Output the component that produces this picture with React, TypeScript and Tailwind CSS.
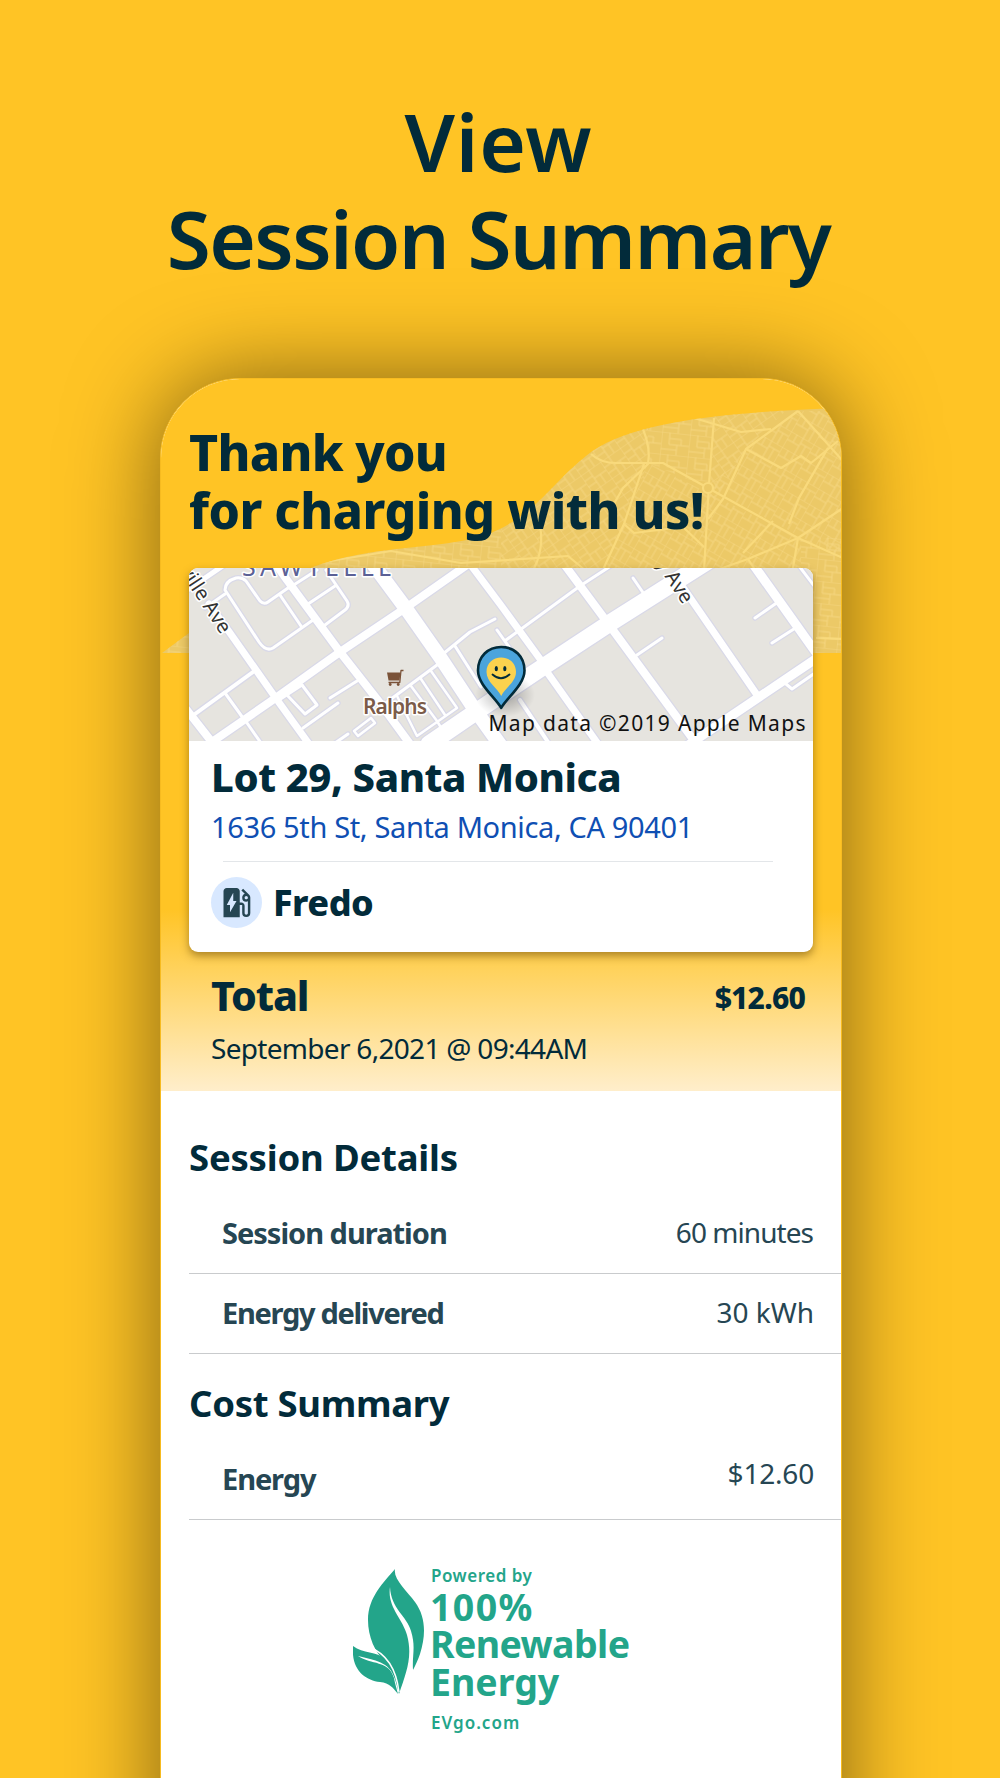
import { MdEvStation } from "react-icons/md";

const mapRoads: { d: string; w: number }[] = [
  { d: "M0 21 L35 -3", w: 5 },
  { d: "M16 40 L36 26", w: 3 },
  { d: "M99 20 L79 34 Q75 37 71 33 L57 13 Q53 9 47 10 Q36 13 36 22 L70 74 Q77 84 84 80 L124 52", w: 3 },
  { d: "M91 27 L112 58", w: 3 },
  { d: "M119 36 L146 18", w: 3 },
  { d: "M100 20 L128 2", w: 3 },
  { d: "M137 2 L158 33 Q161 38 156 42 L136 57", w: 3 },
  { d: "M6 146 L64 104", w: 4 },
  { d: "M36 125 L54 150 M58 155 L72 175", w: 3 },
  { d: "M98 127 L116 146 L128 137 L113 117", w: 3 },
  { d: "M90 132 L113 117", w: 3 },
  { d: "M141 130 L168 113", w: 3 },
  { d: "M114 160 L149 135", w: 3 },
  { d: "M136 182 L159 166", w: 3 },
  { d: "M165 163 L182 150 L186 155 L169 168 Z", w: 2.5 },
  { d: "M198 134 L248 97", w: 3 },
  { d: "M208 128 L228 168 L268 140 L242 103 M222 118 L248 153 L257 168 M232 111 L256 147", w: 2.5 },
  { d: "M306 51 L281 64 L254 86", w: 3 },
  { d: "M266 78 L292 119", w: 3 },
  { d: "M308 62 L325 86", w: 3 },
  { d: "M317 72 L391 18 L431 -8", w: 3 },
  { d: "M444 10 L455 26", w: 3 },
  { d: "M448 87 L473 70", w: 3 },
  { d: "M566 50 L589 34 M583 75 L608 59", w: 3 },
  { d: "M597 116 L603 121 L626 105", w: 3 },
  { d: "M331 132 L359 174", w: 4 },
  { d: "M607 -6 L626 19", w: 3 },
  { d: "M20 36 L41 65 L86 129 L120 176", w: 7 },
  { d: "M84 -8 L98 12 L151 84 L191 135 L221 176", w: 8 },
  { d: "M-3 141 L26 178", w: 8 },
  { d: "M285 -8 L218 39 L151 84 L88 129 L20 176", w: 8 },
  { d: "M278 -8 L311 36 L354 95", w: 7 },
  { d: "M372 -8 L418 54 L509 178", w: 8 },
  { d: "M358 104 L409 176", w: 7 },
  { d: "M493 18 L568 127", w: 7 },
  { d: "M561 -8 L628 86", w: 9 },
  { d: "M628 90 L511 169 L498 178", w: 9 },
  { d: "M178 -12 L218 42 L251 89 L284 139 L312 178", w: 14 },
  { d: "M530 -14 L421 55 L354 99 L300 135 L240 176", w: 17 },
];

const hillRoads = [
  "M482 50 Q490 70 487 85 L462 109 L450 130",
  "M430 75 Q440 84 455 84 L502 84 L547 109 L637 159 L682 179",
  "M553 39 L548 105 L543 192",
  "M533 39 L580 53 L610 50",
  "M637 32 L585 70 L562 120 L547 140",
  "M637 32 L682 82",
  "M585 70 L620 89 L640 77 L650 84 L677 62",
  "M667 69 L638 119 L628 145",
  "M682 129 L637 159 L587 180 L553 192",
  "M637 159 L631 195",
  "M582 174 L612 142",
  "M587 180 L600 200",
  "M120 190 L230 172 L300 184 L407 177 L425 192",
  "M483 85 L463 145 L440 195",
  "M463 145 L473 154 L522 148 L543 168",
  "M378 142 Q385 170 370 195",
  "M655 259 L682 260",
];

const hillShape =
  "M1 274 L28 254 C90 215 130 195 147 190 C215 163 280 173 330 154 C375 135 390 105 425 77 C465 43 560 33 682 29 L682 274 Z";

function HillMap() {
  return (
    <svg className="absolute left-0 top-0" width="682" height="274" viewBox="0 0 682 274" fill="none">
      <defs>
        <clipPath id="hill">
          <path d={hillShape} />
        </clipPath>
        <pattern id="blocksA" width="26" height="18" patternUnits="userSpaceOnUse" patternTransform="rotate(30)">
          <path d="M0 0 H26 M0 0 V18 M0 9 H14 M14 0 V18 M7 0 V9 M14 6 H26 M20 6 V18" stroke="#f5d67f" strokeWidth="1" />
        </pattern>
        <pattern id="blocksB" width="24" height="20" patternUnits="userSpaceOnUse" patternTransform="rotate(-35)">
          <path d="M0 0 H24 M0 0 V20 M10 0 V20 M0 7 H10 M0 14 H10 M10 10 H24 M17 10 V20" stroke="#f5d67f" strokeWidth="1" />
        </pattern>
        <pattern id="blocksC" width="28" height="22" patternUnits="userSpaceOnUse" patternTransform="rotate(6)">
          <path d="M0 0 H28 M0 0 V22 M8 0 V12 H28 M16 12 V22 M8 6 H20 V12 M0 17 H16" stroke="#f5d67f" strokeWidth="1" />
        </pattern>
      </defs>
      <g clipPath="url(#hill)">
        <path d="M0 0 H682 V274 H0 Z" fill="#ecc967" />
        <path d="M0 120 H340 V274 H0 Z M487 30 H553 L548 109 L487 84 Z M640 159 H682 V274 H640 Z" fill="url(#blocksC)" />
        <path d="M340 0 H487 V84 L462 145 L440 200 H340 Z M553 20 H637 L585 70 L548 130 Z" fill="url(#blocksB)" />
        <path d="M637 32 H682 V180 L548 109 L585 70 Z M487 84 L640 160 V200 H440 Z" fill="url(#blocksA)" />
        <g stroke="#f9da7c" strokeWidth="2.2" strokeLinejoin="round">
          {hillRoads.map((d) => (
            <path key={d} d={d} />
          ))}
          <circle cx="547" cy="109" r="5" fill="#ecc967" />
        </g>
      </g>
    </svg>
  );
}

function LocationMap() {
  return (
    <svg className="block" width="624" height="173" viewBox="0 0 624 173" fill="none">
      <defs>
        <radialGradient id="pinShade">
          <stop offset="0" stopColor="#000" stopOpacity="0.3" />
          <stop offset="1" stopColor="#000" stopOpacity="0" />
        </radialGradient>
      </defs>
      <rect width="624" height="173" fill="#e6e4df" />
      <g stroke="#d9d9e8" strokeLinecap="round" strokeLinejoin="round">
        {mapRoads.map((r) => (
          <path key={r.d} d={r.d} strokeWidth={r.w + 2.5} />
        ))}
      </g>
      <g stroke="#fff" strokeLinecap="round" strokeLinejoin="round">
        {mapRoads.map((r) => (
          <path key={r.d} d={r.d} strokeWidth={r.w} />
        ))}
      </g>
      <g className="font-['Noto_Sans']" stroke="#fff" strokeWidth="3" strokeLinejoin="round" paintOrder="stroke">
        <text x="53" y="7.5" fontSize="25" fill="#5b6196" textLength="150">
          SAWTELLE
        </text>
        <text transform="translate(32 67) rotate(57)" fontSize="20" fill="#333" textAnchor="end">
          ville Ave
        </text>
        <text transform="translate(494 37) rotate(57)" fontSize="20" fill="#333" textAnchor="end">
          y Ave
        </text>
        <text x="174" y="146" fontSize="21" fontWeight="600" fill="#7b5b49" textLength="64">
          Ralphs
        </text>
      </g>
      <path d="M198 104.500 H211.500 L210.500 112.500 H199.500 Z" fill="#7a5238" />
      <path
        d="M214.500 102.500 H212 L210.800 114.500 H199.500"
        stroke="#7a5238"
        strokeWidth="1.300"
        strokeLinejoin="round"
      />
      <circle cx="201.200" cy="116.500" r="1.400" fill="#7a5238" />
      <circle cx="209.200" cy="116.500" r="1.400" fill="#7a5238" />
      <ellipse cx="316" cy="127" rx="30" ry="22" fill="url(#pinShade)" />
      <path
        d="M312.200 140 C307 130 289 117 289 102.500 C289 88.500 299 79 312.200 79 C325.500 79 335.500 88.500 335.500 102.500 C335.500 117 317.500 130 312.200 140 Z"
        fill="#4ba4dc"
        stroke="#022b3a"
        strokeWidth="2.600"
        strokeLinejoin="round"
      />
      <path
        d="M312.200 128 C308.500 120 297.500 114 297.500 104 C297.500 95 304 89.500 312.200 89.500 C320.500 89.500 327 95 327 104 C327 114 316 120 312.200 128 Z"
        fill="#fbd24e"
      />
      <ellipse cx="307.300" cy="100.700" rx="1.600" ry="2.600" fill="#022b3a" />
      <ellipse cx="315.800" cy="100.700" rx="1.600" ry="2.600" fill="#022b3a" />
      <path d="M303.500 106.500 Q312 114 320.500 106.500" stroke="#022b3a" strokeWidth="1.800" strokeLinecap="round" />
      <text
        className="font-['Noto_Sans']"
        x="299.500"
        y="162.700"
        fontSize="21"
        fill="#111"
        textLength="317"
      >
        Map data ©2019 Apple Maps
      </text>
    </svg>
  );
}

function LeafLogo() {
  return (
    <svg className="mt-[3px] block" width="72" height="126" viewBox="0 0 72 126">
      <path
        d="M42 0 C40 10 54 22 62 33 C73 48 73 66 67 85 C65 91 62 97 60 101 C59 86 63 78 58 62 C54 47 38 40 37 18 C34 38 50 50 54 66 C60 88 53 104 46 125 C43 112 40 101 32 93 C22 83 15 68 15 51 C15 28 31 13 42 0 Z"
        fill="#23a58a"
      />
      <path
        d="M0 77 C10 85 24 82 32 90 C41 99 43 109 42 109 C36 93 22 91 5 87 C18 96 36 91 41 109 C42 115 44 121 45 125 C40 119 37 114 27 113 C12 111 -2 101 0 77 Z"
        fill="#23a58a"
      />
      <path d="M16 78 C32 84 43 98 46 123" stroke="#fff" strokeWidth="1.500" fill="none" />
    </svg>
  );
}

function DetailRow({
  label,
  value,
  labelClass,
  className,
  valueClass = "-mt-px",
}: {
  label: string;
  value: string;
  labelClass: string;
  className: string;
  valueClass?: string;
}) {
  return (
    <div
      className={`ml-7 flex justify-between border-b border-[#c9cbcd] pb-[22px] pl-[33px] pr-[27px] leading-9 text-[#264653] ${className}`}
    >
      <span className={`text-[29px] font-bold ${labelClass}`}>{label}</span>
      <span className={`text-[28px] ${valueClass}`}>{value}</span>
    </div>
  );
}

export default function App() {
  return (
    <div className="h-[1778px] w-[1000px] overflow-hidden bg-[#ffc425] font-['Noto_Sans',sans-serif] text-[#022b3a]">
      <h1 className="pr-[3px] pt-[92px] text-center text-[80px] font-semibold leading-[97px]">
        <span className="block tracking-[0.8px]">View</span>
        <span className="block tracking-[-1.6px]">Session Summary</span>
      </h1>

      <main className="relative ml-[160px] mt-[92px] h-[1500px] w-[682px] overflow-hidden rounded-t-[80px] border border-[#f7bb20] bg-white shadow-[0_0_92px_rgba(0,0,0,0.5)]">
        <header className="relative bg-[linear-gradient(#ffc425_74.5%,#ffeecb)] pb-[25px]">
          <HillMap />
          <div className="relative px-7 pt-[44px]">
            <h2 className="text-[50px] font-extrabold leading-[58px]">
              <span className="block tracking-[-0.7px]">Thank you</span>
              <span className="block tracking-[-0.5px]">for charging with us!</span>
            </h2>

            <section className="mt-[29px] w-[624px] overflow-hidden rounded-[9px] bg-white shadow-[0_4px_8px_rgba(90,60,0,0.5)]">
              <LocationMap />
              <div className="pb-[24px] pl-[22px] pt-[12px]">
                <h3 className="text-[40px] font-extrabold leading-[48px] tracking-[-0.4px]">Lot 29, Santa Monica</h3>
                <p className="mt-2 text-[29px] leading-9 tracking-[-0.36px] text-[#0f4fb3]">
                  1636 5th St, Santa Monica, CA 90401
                </p>
                <hr className="ml-3 mr-10 mt-4 border-[#e3e6e9]" />
                <div className="mt-[15px] flex items-center gap-[11px]">
                  <span className="flex h-[51px] w-[51px] items-center justify-center rounded-full bg-[#d8e8ff]">
                    <MdEvStation className="text-[39px] text-[#264653]" />
                  </span>
                  <span className="text-[36px] font-extrabold leading-[49px] tracking-[-0.5px]">Fredo</span>
                </div>
              </div>
            </section>

            <div className="ml-[22px] mr-[8px] mt-[18px] flex justify-between">
              <div>
                <p className="text-[41px] font-extrabold leading-[50px] tracking-[-1.1px]">Total</p>
                <p className="mt-[10px] text-[28px] leading-9 tracking-[-0.7px]">September 6,2021 @ 09:44AM</p>
              </div>
              <p className="text-[30px] font-extrabold leading-[56px] tracking-[-0.8px]">$12.60</p>
            </div>
          </div>
        </header>

        <h2 className="ml-7 pt-[44px] text-[36.5px] font-bold leading-[44px] tracking-[-0.2px]">Session Details</h2>
        <DetailRow
          className="pt-9"
          label="Session duration"
          labelClass="tracking-[-1px]"
          value="60 minutes"
          valueClass="-mt-px mr-px tracking-[-0.95px]"
        />
        <DetailRow
          className="pt-[21px]"
          label="Energy delivered"
          labelClass="tracking-[-1.3px]"
          value="30 kWh"
        />

        <h2 className="ml-7 pt-[27px] text-[36.5px] font-bold leading-[44px] tracking-[-0.3px]">Cost Summary</h2>
        <DetailRow className="pt-9" label="Energy" labelClass="tracking-[-1.1px]" value="$12.60" valueClass="-mt-[6px] tracking-[-0.2px]" />

        <footer className="ml-[192px] mt-[46px] flex gap-[5px] text-[#23a58a]">
          <LeafLogo />
          <div className="font-bold">
            <p className="ml-px text-[17px] font-semibold leading-5 tracking-[0.5px]">Powered by</p>
            <div className="mt-[2px] text-[37.5px] leading-[37.3px]">
              <p className="tracking-[1.4px]">100%</p>
              <p className="tracking-[-0.6px]">Renewable</p>
              <p className="tracking-[0px]">Energy</p>
            </div>
            <p className="ml-px mt-[13px] text-[17px] font-semibold leading-5 tracking-[1px]">EVgo.com</p>
          </div>
        </footer>
      </main>
    </div>
  );
}
